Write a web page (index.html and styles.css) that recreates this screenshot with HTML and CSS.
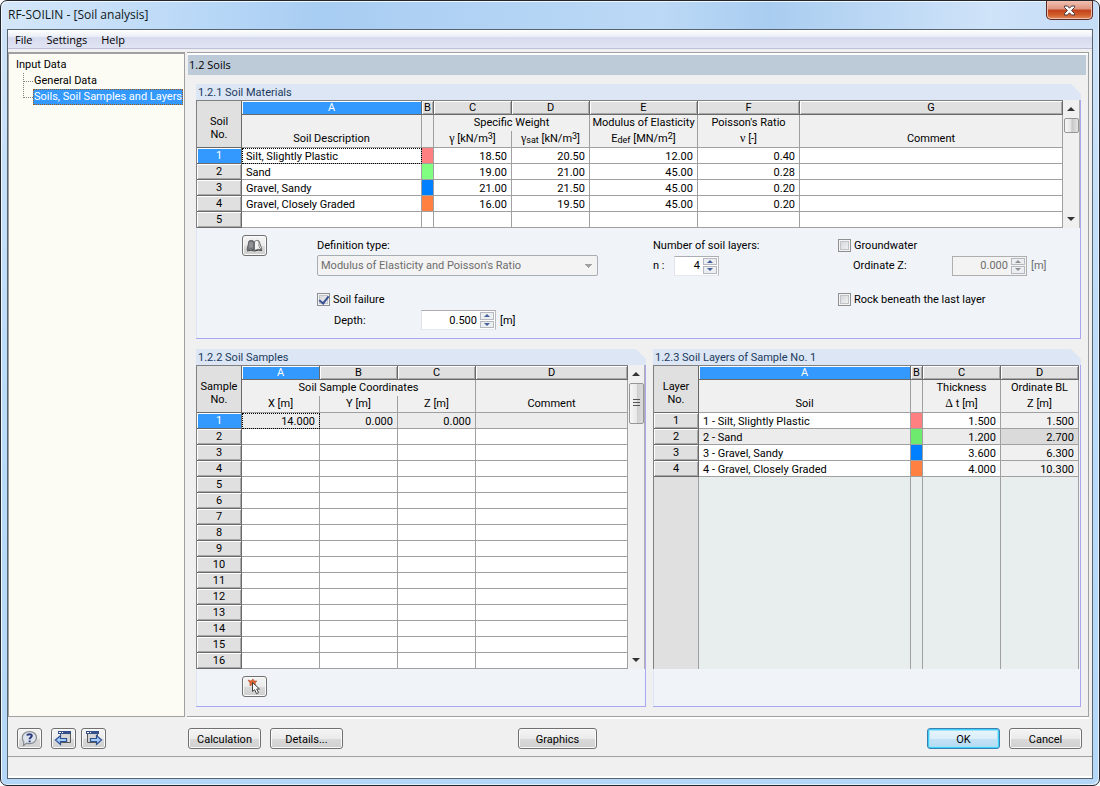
FILE: index.html
```html
<!DOCTYPE html>
<html lang="en">
<head>
<meta charset="utf-8">
<title>RF-SOILIN - [Soil analysis]</title>
<link rel="stylesheet" href="styles.css">
</head>
<body>
<div class="window">
  <header class="titlebar">
    <h1>RF-SOILIN - [Soil analysis]</h1>
    <button class="close" type="button" aria-label="Close">
      <svg width="13" height="11" viewBox="0 0 13 11"><path d="M1.500 1h3L6.500 3.200 8.500 1h3v1.500L8.500 5.500l3 3V10h-3L6.500 7.800 4.500 10h-3V8.500l3-3-3-3z" fill="#fff" stroke="#4a3b41"/></svg>
    </button>
  </header>
  <div class="client">
    <nav class="menubar">
      <button type="button">File</button><button type="button">Settings</button><button type="button">Help</button>
    </nav>
    <div class="workspace">
      <aside class="tree">
        <a href="#input" class="node">Input Data</a>
        <ul>
          <li><a href="#general" class="node">General Data</a></li>
          <li><a href="#soils" class="node selected">Soils, Soil Samples and Layers</a></li>
        </ul>
      </aside>
      <main class="page">
        <h2 class="page-title">1.2 Soils</h2>
        <div class="groups">
          <section class="group materials">
            <h3>1.2.1 Soil Materials</h3>
            <div class="group-body">
              <div class="grid-row">
                <table class="sheet">
                  <colgroup><col class="c-num"><col class="c-desc"><col class="c-swatch"><col class="c-val"><col class="c-val"><col class="c-mod"><col class="c-poi"><col></colgroup>
                  <thead>
                    <tr class="letters"><th rowspan="3" class="corner">Soil<br>No.</th><th class="on">A</th><th class="slim">B</th><th>C</th><th>D</th><th>E</th><th>F</th><th>G</th></tr>
                    <tr class="heads"><th></th><th></th><th colspan="2">Specific Weight</th><th>Modulus of Elasticity</th><th>Poisson's Ratio</th><th></th></tr>
                    <tr class="units"><th>Soil Description</th><th></th><th><i>γ</i> [kN/m<sup>3</sup>]</th><th><i>γ</i><sub>sat</sub> [kN/m<sup>3</sup>]</th><th>E<sub>def</sub> [MN/m<sup>2</sup>]</th><th><i>ν</i> [-]</th><th>Comment</th></tr>
                  </thead>
                  <tbody>
                    <tr><th class="on">1</th><td class="txt focus">Silt, Slightly Plastic</td><td class="red"></td><td>18.50</td><td>20.50</td><td>12.00</td><td>0.40</td><td></td></tr>
                    <tr><th>2</th><td class="txt">Sand</td><td class="green"></td><td>19.00</td><td>21.00</td><td>45.00</td><td>0.28</td><td></td></tr>
                    <tr><th>3</th><td class="txt">Gravel, Sandy</td><td class="blue"></td><td>21.00</td><td>21.50</td><td>45.00</td><td>0.20</td><td></td></tr>
                    <tr><th>4</th><td class="txt">Gravel, Closely Graded</td><td class="orange"></td><td>16.00</td><td>19.50</td><td>45.00</td><td>0.20</td><td></td></tr>
                    <tr><th>5</th><td></td><td></td><td></td><td></td><td></td><td></td><td></td></tr>
                  </tbody>
                </table>
                <div class="scroll">
                  <button type="button" class="arrow up" aria-label="Scroll up"></button>
                  <span class="thumb small"></span>
                  <button type="button" class="arrow down" aria-label="Scroll down"></button>
                </div>
              </div>
              <div class="options">
                <div class="opt">
                  <button type="button" class="btn icon" aria-label="Material library">
                    <svg width="17" height="15" viewBox="0 0 17 15"><path d="M1 12 3 3q3-1.500 5 .5v8.500Q5 10 1 12z" fill="#777b7f" stroke="#5e6266"/><path d="M4 4.500v5M6 4.500v5" stroke="#a9adb0"/><path d="M8.500 3.500q2-2 4.500-.5l3 8.500q-4-1-7.500 1z" fill="#f4f4f4" stroke="#6c7074"/><path d="M13 3v6l2 2" fill="none" stroke="#888"/><path d="M1 13q4-1.500 7.500 0 3.500-1.500 7.500-.5" fill="none" stroke="#444"/></svg>
                  </button>
                </div>
                <div class="opt">
                  <label for="deftype">Definition type:</label>
                  <select id="deftype" disabled><option>Modulus of Elasticity and Poisson's Ratio</option></select>
                  <label class="third"><input type="checkbox" checked> Soil failure</label>
                  <div class="field depth"><label for="depth">Depth:</label><span class="spin"><input id="depth" type="text" value="0.500"><span class="steps"><button type="button" aria-label="Increase"></button><button type="button" aria-label="Decrease"></button></span></span><span class="unit">[m]</span></div>
                </div>
                <div class="opt">
                  <span>Number of soil layers:</span>
                  <div class="field count"><label for="layers">n :</label><span class="spin short"><input id="layers" type="text" value="4"><span class="steps"><button type="button" aria-label="Increase"></button><button type="button" aria-label="Decrease"></button></span></span></div>
                </div>
                <div class="opt">
                  <label><input type="checkbox"> Groundwater</label>
                  <div class="field ordinate"><label for="ordz">Ordinate Z:</label><span class="spin off"><input id="ordz" type="text" value="0.000" disabled><span class="steps"><button type="button" disabled aria-label="Increase"></button><button type="button" disabled aria-label="Decrease"></button></span></span><span class="unit dim">[m]</span></div>
                  <label class="third"><input type="checkbox"> Rock beneath the last layer</label>
                </div>
              </div>
            </div>
          </section>

          <div class="lower">
            <section class="group">
              <h3>1.2.2 Soil Samples</h3>
              <div class="group-body">
                <div class="grid-row">
                  <table class="sheet">
                    <colgroup><col class="c-num"><col class="c-val"><col class="c-val"><col class="c-val"><col></colgroup>
                    <thead>
                      <tr class="letters"><th rowspan="3" class="corner">Sample<br>No.</th><th class="on">A</th><th>B</th><th>C</th><th>D</th></tr>
                      <tr class="heads"><th colspan="3">Soil Sample Coordinates</th><th></th></tr>
                      <tr class="units"><th>X [m]</th><th>Y [m]</th><th>Z [m]</th><th>Comment</th></tr>
                    </thead>
                    <tbody>
                      <tr class="shade"><th class="on">1</th><td class="focus">14.000</td><td>0.000</td><td>0.000</td><td></td></tr>
                      <tr><th>2</th><td></td><td></td><td></td><td></td></tr>
                      <tr><th>3</th><td></td><td></td><td></td><td></td></tr>
                      <tr><th>4</th><td></td><td></td><td></td><td></td></tr>
                      <tr><th>5</th><td></td><td></td><td></td><td></td></tr>
                      <tr><th>6</th><td></td><td></td><td></td><td></td></tr>
                      <tr><th>7</th><td></td><td></td><td></td><td></td></tr>
                      <tr><th>8</th><td></td><td></td><td></td><td></td></tr>
                      <tr><th>9</th><td></td><td></td><td></td><td></td></tr>
                      <tr><th>10</th><td></td><td></td><td></td><td></td></tr>
                      <tr><th>11</th><td></td><td></td><td></td><td></td></tr>
                      <tr><th>12</th><td></td><td></td><td></td><td></td></tr>
                      <tr><th>13</th><td></td><td></td><td></td><td></td></tr>
                      <tr><th>14</th><td></td><td></td><td></td><td></td></tr>
                      <tr><th>15</th><td></td><td></td><td></td><td></td></tr>
                      <tr><th>16</th><td></td><td></td><td></td><td></td></tr>
                    </tbody>
                  </table>
                  <div class="scroll">
                    <button type="button" class="arrow up" aria-label="Scroll up"></button>
                    <span class="thumb"></span>
                    <button type="button" class="arrow down" aria-label="Scroll down"></button>
                  </div>
                </div>
                <div class="group-foot">
                  <button type="button" class="btn icon" aria-label="Pick point">
                    <svg width="17" height="17" viewBox="0 0 17 17"><path d="M2 2l3 1 2-2 1 2h3L9 5l1 3-3-2-3 2V5z" fill="#e0642e" stroke="#b5532c" stroke-width=".6"/><path d="M6.500 4.500v9l2.200-1.800 1.800 4 2-1-1.800-3.700H13.500z" fill="#fff" stroke="#444"/></svg>
                  </button>
                </div>
              </div>
            </section>

            <section class="group">
              <h3>1.2.3 Soil Layers of Sample No. 1</h3>
              <div class="group-body">
                <div class="grid-row inset">
                  <table class="sheet">
                    <colgroup><col class="c-num"><col><col class="c-swatch"><col class="c-val"><col class="c-val"></colgroup>
                    <thead>
                      <tr class="letters"><th rowspan="3" class="corner">Layer<br>No.</th><th class="on">A</th><th class="slim">B</th><th>C</th><th>D</th></tr>
                      <tr class="heads"><th></th><th></th><th>Thickness</th><th>Ordinate BL</th></tr>
                      <tr class="units"><th>Soil</th><th></th><th><i>Δ</i> t [m]</th><th>Z [m]</th></tr>
                    </thead>
                    <tbody>
                      <tr><th>1</th><td class="txt">1 - Silt, Slightly Plastic</td><td class="red"></td><td>1.500</td><td class="calc">1.500</td></tr>
                      <tr class="shade"><th>2</th><td class="txt">2 - Sand</td><td class="green"></td><td>1.200</td><td class="calc">2.700</td></tr>
                      <tr><th>3</th><td class="txt">3 - Gravel, Sandy</td><td class="blue"></td><td>3.600</td><td class="calc">6.300</td></tr>
                      <tr><th>4</th><td class="txt">4 - Gravel, Closely Graded</td><td class="orange"></td><td>4.000</td><td class="calc">10.300</td></tr>
                      <tr class="void"><th></th><td></td><td></td><td></td><td></td></tr>
                    </tbody>
                  </table>
                </div>
                <div class="group-foot"></div>
              </div>
            </section>
          </div>
        </div>
      </main>
    </div>
    <footer class="actions">
      <div class="tools">
        <button type="button" class="btn icon help" aria-label="Help">
          <svg width="19" height="17" viewBox="0 0 19 17"><path d="M9.500 1.500c4 0 7 2.600 7 6s-3 6.200-7 6.200c-1 0-2-.2-2.800-.5L3.500 15.500l.3-3.600C2.800 10.800 2.300 9.200 2.300 7.500c0-3.400 3.200-6 7.200-6z" fill="#dde3ea" stroke="#858a90" stroke-width="1.200"/><path d="M7.300 5.600c.2-1.700 4.500-2 4.500.2 0 1.600-2.200 1.700-2.200 3.400" fill="none" stroke="#2c3a80" stroke-width="2"/><path d="M8.600 10.500h2v1.800h-2z" fill="#2c3a80"/></svg>
        </button>
        <button type="button" class="btn icon" aria-label="Previous table">
          <svg width="19" height="17" viewBox="0 0 19 17"><path d="M6.500 2.500h10v10h-10z" fill="#d6d6d6" stroke="#5a5a5a"/><path d="M4 1h13v3H4z" fill="#34508c"/><path d="M5 2.500h2M8 2.500h1" stroke="#fff"/><path d="M1.500 10 6.500 5.500V8.500H12.500v3H6.500v3z" fill="#a4ccf8" stroke="#2c4f94" stroke-width="1.200"/></svg>
        </button>
        <button type="button" class="btn icon" aria-label="Next table">
          <svg width="19" height="17" viewBox="0 0 19 17"><path d="M3.500 2.500h10v10h-10z" fill="#d6d6d6" stroke="#5a5a5a"/><path d="M2 1h13v3H2z" fill="#34508c"/><path d="M3 2.500h2M6 2.500h1" stroke="#fff"/><path d="M17.500 10 12.500 5.500V8.500H6.500v3h6v3z" fill="#a4ccf8" stroke="#2c4f94" stroke-width="1.200"/></svg>
        </button>
      </div>
      <div class="commands">
        <button type="button" class="btn">Calculation</button>
        <button type="button" class="btn">Details...</button>
        <button type="button" class="btn wide">Graphics</button>
        <button type="button" class="btn primary">OK</button>
        <button type="button" class="btn">Cancel</button>
      </div>
    </footer>
    <div class="statusbar"></div>
  </div>
</div>
</body>
</html>
```
FILE: styles.css
```css
* { box-sizing: border-box; }

body {
  margin: 0;
  background: #fff;
  color: #000;
  font: 11px/15px Roboto, "Liberation Sans", sans-serif;
}

h1, h2, h3, ul { margin: 0; padding: 0; font-weight: normal; }
button, input, select { font: inherit; color: inherit; margin: 0; padding: 0; }
svg { display: block; }

/* window frame */
.window {
  display: flex;
  flex-direction: column;
  min-height: 100vh;
  padding: 0 6px 6px;
  border: 1px solid #23262d;
  border-radius: 7px;
  background:
    linear-gradient(to right, #d5e7f9 0, #b9d8f7 200px, #a8cdf2 320px, #bcd9f6 60%, #a9cdf0 70%, #cfe3f9 90%, #c4dcf6) top / 100% 28px no-repeat,
    linear-gradient(#cfe3f8, #badbfa 50%, #b4d7f8);
  box-shadow: inset 1px 1px #eef6fe, inset -1px -1px #e4f1fd;
}

.titlebar {
  display: flex;
  justify-content: space-between;
  align-items: flex-start;
  height: 28px;
}

.titlebar h1 {
  padding-left: 1px;
  font: 12px/28px "Open Sans", "Noto Sans", sans-serif;
  color: #101820;
}

.close {
  display: flex;
  justify-content: center;
  align-items: center;
  width: 47px;
  height: 19px;
  border: 1px solid #5a2a26;
  border-top: 0;
  border-radius: 0 0 5px 5px;
  background: linear-gradient(#f1c0b2, #df9580 45%, #c2401a 50%, #cf5a28 75%, #e08a5c);
  box-shadow: inset 0 0 0 1px #f0bfae;
}

.client {
  display: flex;
  flex-direction: column;
  flex: 1;
  border: 1px solid #56656f;
  background: #f0f0f0;
  box-shadow: inset 0 -2px #fff;
}

.menubar {
  display: flex;
  height: 19px;
  border-bottom: 1px solid #bcbfd6;
  background: linear-gradient(#fff, #e9edf6 38%, #d6dbee 42%, #e1e4f3);
}

.menubar button {
  padding: 0 7px;
  border: 0;
  background: none;
  font: 11px/19px "Open Sans", "Noto Sans", sans-serif;
}

/* workspace */
.workspace {
  display: flex;
  flex: 1;
  gap: 2px;
  padding: 3px 3px 0 0;
}

.tree {
  flex: none;
  width: 177px;
  padding: 3px 0 0 6px;
  border: 1px solid #a0a0a0;
  border-top-width: 2px;
  background: #fcfcf4;
  line-height: 16px;
}

.tree ul { padding-left: 8px; list-style: none; }
.tree li { position: relative; padding-left: 10px; }

.tree li::before {
  content: "";
  position: absolute;
  left: 0;
  top: 0;
  width: 9px;
  height: 8px;
  border: dotted #808080;
  border-width: 0 0 1px 1px;
}

.tree li:last-child::before { top: -8px; height: 16px; }
.node { display: inline-block; height: 16px; padding: 0 1px; color: #000; text-decoration: none; white-space: nowrap; }
li .node { padding: 0 1px; }
.node.selected { background: #39f; color: #fff; outline: 1px dotted #a05a1c; outline-offset: -1px; }

.page {
  flex: 1;
  min-width: 0;
  border: solid #a0a0a0;
  border-width: 1px 1px 1px 0;
  box-shadow: 0 2px #fff, inset 0 2px #fff;
  padding: 2px 2px 9px 1px;
}

.page-title {
  height: 20px;
  padding-left: 1px;
  background: #bdcad8;
  font: 11px/20px "Open Sans", "Noto Sans", sans-serif;
}

.groups { display: flex; flex-direction: column; gap: 10px; padding: 9px 5px 0 8px; }
.lower { display: grid; grid-template-columns: 450fr 428fr; gap: 7px; }
.group { display: flex; flex-direction: column; min-width: 0; }

.group h3 {
  height: 16px;
  padding-left: 2px;
  background: #dce6f4;
  color: #1b3a5e;
  font-size: 11px;
  line-height: 18px;
  clip-path: polygon(0 0, calc(100% - 10px) 0, 100% 10px, 100% 100%, 0 100%);
}

.group-body {
  display: flex;
  flex-direction: column;
  flex: 1;
  border: solid #a8a8f0;
  border-width: 0 1px 1px 0;
  background: #f0f4f9;
  box-shadow: inset 1px 0 #dce4f6;
}

.grid-row { display: flex; }
.grid-row.inset { flex: 1; padding-right: 1px; }

/* tables */
.sheet {
  flex: 1;
  table-layout: fixed;
  width: 100%;
  min-width: 0;
  border-collapse: separate;
  border-spacing: 0;
  border: solid #808080;
  border-width: 1px 0 0 1px;
  background: #fff;
}

.c-num { width: 45px; }
.c-desc { width: 180px; }
.c-swatch { width: 12px; }
.c-val { width: 78px; }
.c-mod { width: 108px; }
.c-poi { width: 102px; }

.sheet th, .sheet td {
  height: 16px;
  padding: 0 4px;
  border: solid #a0a0a0;
  border-width: 0 1px 1px 0;
  font-weight: normal;
  line-height: 15px;
  text-align: right;
  white-space: nowrap;
}

.sheet td { padding-top: 2px; line-height: 13px; }
.sheet th { padding: 0; background: #f0f0f0; text-align: center; }
.sheet td.txt { text-align: left; }

.sheet .letters th, .sheet tbody th {
  border-color: #696969;
  background: #e0e0e0;
  box-shadow: inset 1px 1px #fff, inset -1px -1px #a8a8a8;
}

.sheet .letters th { height: 14px; line-height: 13px; }
.sheet .letters .corner { padding-top: 8px; line-height: 13px; box-shadow: none; }
.sheet .letters .on, .sheet tbody .on { background: #39f; color: #fff; box-shadow: inset 1px 1px #fff; }
.sheet .heads th { border-bottom: 0; line-height: 16px; vertical-align: top; }
.sheet .units th { height: 17px; line-height: 16px; vertical-align: top; }

.sheet i { font: 12px/12px "Liberation Serif", serif; }
.sheet sup, .sheet sub { font-size: 9px; line-height: 0; }
.sheet sup { vertical-align: 3px; }
.sheet sub { vertical-align: -1px; }

.sheet .focus { outline: 1px dotted #000; outline-offset: -1px; }
.shade td { background: #ececec; }
.sheet .calc { background: #f0f0f0; }
.sheet .shade .calc { background: #dadada; }
.sheet .red { background: #ff8080; }
.sheet .green { background: #80ff80; }
.sheet .shade .green { background: #6eea6e; }
.sheet .blue { background: #0080ff; }
.sheet .orange { background: #ff8040; }
.sheet .void th, .sheet .void td { height: auto; border-bottom: 0; background: #e8eeee; }
.sheet .void th { background: #e0e0e0; border-color: #a0a0a0; box-shadow: none; }
.sheet tbody tr { height: 16px; }
.sheet tbody tr.void { height: 192px; }

/* scrollbars */
.scroll {
  display: flex;
  flex-direction: column;
  align-items: center;
  flex: none;
  width: 17px;
  background: #f0f0f0;
  border-right: 1px solid #b0b0b0;
}

.arrow { width: 15px; height: 18px; border: 0; background: none; }
.arrow::before { content: ""; display: block; width: 0; margin: 0 auto; border: solid transparent; border-width: 0 4px; }
.arrow.up::before { border-bottom: 4px solid #333; }
.arrow.down { margin-top: auto; }
.arrow.down::before { border-top: 4px solid #333; }

.thumb {
  width: 15px;
  height: 41px;
  border: 1px solid #969696;
  border-radius: 2px;
  background:
    repeating-linear-gradient(#555 0 1px, transparent 1px 3px) center / 7px 9px no-repeat,
    linear-gradient(to right, #f6f6f6, #e8e8e8 50%, #cfcfcf 55%, #dcdcdc);
}

.thumb.small { height: 15px; background: linear-gradient(to right, #f6f6f6, #e8e8e8 40%, #c8c8c8 55%, #e4e4e4); }

/* options below the materials table */
.options {
  display: grid;
  grid-template-columns: 75px 336px 185px 1fr;
  padding: 7px 0 7px 46px;
}

.opt { display: grid; grid-template-rows: 20px 21px 13px 20px 22px; align-items: center; white-space: nowrap; }
.opt > .third { grid-row: 4; }
.opt > label { display: flex; align-items: center; gap: 3px; }

.opt select {
  appearance: none;
  width: 281px;
  height: 21px;
  padding: 0 3px;
  border: 1px solid #a6adb3;
  border-radius: 2px;
  background:
    linear-gradient(to bottom right, #a0a0a0 50%, transparent 50%) right 4px center / 4px 4px no-repeat,
    linear-gradient(to bottom left, #a0a0a0 50%, transparent 50%) right 8px center / 4px 4px no-repeat,
    #f3f3f3;
  color: #6d6d6d;
  opacity: 1;
}

.opt input[type="checkbox"] {
  appearance: none;
  width: 13px;
  height: 13px;
  border: 1px solid #8e8f8f;
  background: linear-gradient(135deg, #cfd3d8, #f6f6f6);
  box-shadow: inset 0 0 0 1px #f4f4f4, inset 0 0 0 2px #bfc4c8;
  display: grid;
  place-items: center;
}

.opt input[type="checkbox"]:checked::before {
  content: "";
  width: 4px;
  height: 8px;
  border: solid #3a4f94;
  border-width: 0 2px 2px 0;
  rotate: 38deg;
}

.field { display: flex; align-items: center; }
.depth { grid-row: 5; padding-left: 17px; }
.depth label { width: 87px; }
.count label { width: 21px; }
.ordinate { padding-left: 15px; }
.ordinate label { width: 99px; }
.unit { padding-left: 4px; }
.dim { color: #6d6d6d; }

.spin {
  display: flex;
  width: 75px;
  height: 20px;
  border: 1px solid #e2e3ea;
  border-color: #abadb3 #b8babf #e3e9ef #e2e3ea;
  background: #fff;
}

.spin.short { width: 45px; }
.spin input { flex: 1; min-width: 0; padding-right: 2px; border: 0; background: none; text-align: right; outline: 0; }
.spin.off { border-color: #afafaf; background: #f3f3f3; color: #6d6d6d; }
.steps { display: flex; flex-direction: column; gap: 1px; width: 16px; padding: 1px; }
.steps button { flex: 1; border: 1px solid #b5b9bf; background: #eceff2; }
.steps button::before { content: ""; display: block; width: 0; margin: 0 auto; border: solid transparent; border-width: 0 3px; }
.steps button:first-child::before { border-bottom: 3px solid #45619d; }
.steps button:last-child::before { border-top: 3px solid #45619d; }
.off .steps button:first-child::before { border-bottom-color: #909090; }
.off .steps button:last-child::before { border-top-color: #909090; }

.group-foot { height: 37px; padding: 7px 0 0 46px; }

/* buttons */
.btn {
  width: 73px;
  height: 21px;
  padding-top: 1px;
  border: 1px solid #707070;
  border-radius: 3px;
  background: linear-gradient(#f4f4f4, #ebebeb 50%, #dadada 52%, #cfcfcf);
  box-shadow: inset 0 0 0 1px #fafafa;
}

.btn.icon { display: grid; place-items: center; width: 25px; padding: 0; }
.btn.wide { width: 79px; margin-left: 166px; }

.btn.primary {
  margin-left: auto;
  border-color: #3c7fb1;
  background: linear-gradient(#e8f5fc, #dceefa 50%, #c2e2f6 52%, #b6daf2);
  box-shadow: inset 0 0 0 1px #3fd0fa, inset 0 0 0 2px #a0e4fb;
}

.actions {
  display: flex;
  height: 40px;
  padding: 11px 10px 0 9px;
  border-bottom: 1px solid #a0a0a0;
}

.tools { display: flex; flex: none; gap: 5px; width: 171px; }
.help { margin-right: 4px; }
.commands { display: flex; flex: 1; gap: 9px; }
.statusbar { height: 21px; }
```
